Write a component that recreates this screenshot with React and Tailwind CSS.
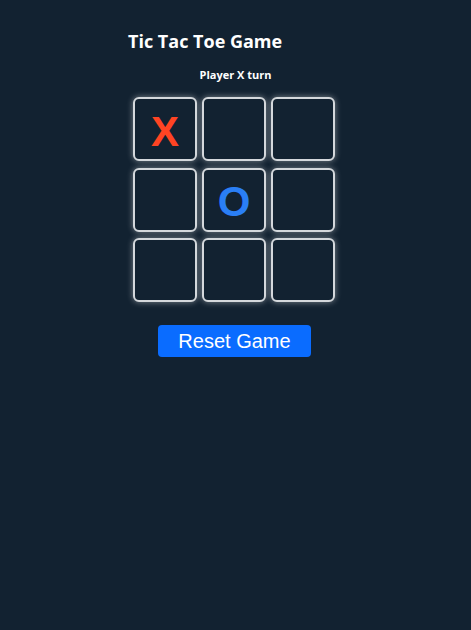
import React, { useState } from 'react';

const initial = ['X', null, null, null, 'O', null, null, null, null];

const App = () => {
  const [board, setBoard] = useState(initial);
  const [turn, setTurn] = useState('X');

  const play = (i) => {
    if (board[i]) return;
    const next = [...board];
    next[i] = turn;
    setBoard(next);
    setTurn(turn === 'X' ? 'O' : 'X');
  };

  const reset = () => {
    setBoard(Array(9).fill(null));
    setTurn('X');
  };

  return (
    <div className="min-h-[630px] bg-[#122231] pt-[29px]">
      <div className="w-[214px] ml-[128px]">
        {/* Header */}
        <h1 className="text-[18px] leading-[24px] font-bold text-white font-['Open_Sans',sans-serif]">
          Tic Tac Toe Game
        </h1>
        <p className="mt-[15px] text-center text-[11px] leading-[14px] font-bold text-white font-['Open_Sans',sans-serif] pl-[1px]">
          Player {turn} turn
        </p>

        {/* Board */}
        <div className="mt-[15px] ml-[5px] grid grid-cols-[64px_64px_64px] gap-x-[5px] gap-y-[6.5px] w-fit">
          {board.map((cell, i) => (
            <button
              key={i}
              onClick={() => play(i)}
              className="w-[64px] h-[64px] rounded-[6px] border-2 border-[#d4d8dc] bg-[#122231] shadow-[0_0_6px_rgba(255,255,255,0.45)] flex items-center justify-center pt-[5px] font-bold text-[42px] leading-none font-['Liberation_Sans',Arial,sans-serif]"
            >
              {cell === 'X' && <span className="text-[#ff4423]">X</span>}
              {cell === 'O' && <span className="text-[#2a7ff5]">O</span>}
            </button>
          ))}
        </div>

        {/* Reset */}
        <div className="mt-[23px] flex justify-center ml-[-1px]">
          <button
            onClick={reset}
            className="h-[32px] px-[20px] rounded-[4px] bg-[#0a6cff] text-white text-[20px] leading-[32px] font-['Liberation_Sans',Arial,sans-serif]"
          >
            Reset Game
          </button>
        </div>
      </div>
    </div>
  );
};

export default App;
